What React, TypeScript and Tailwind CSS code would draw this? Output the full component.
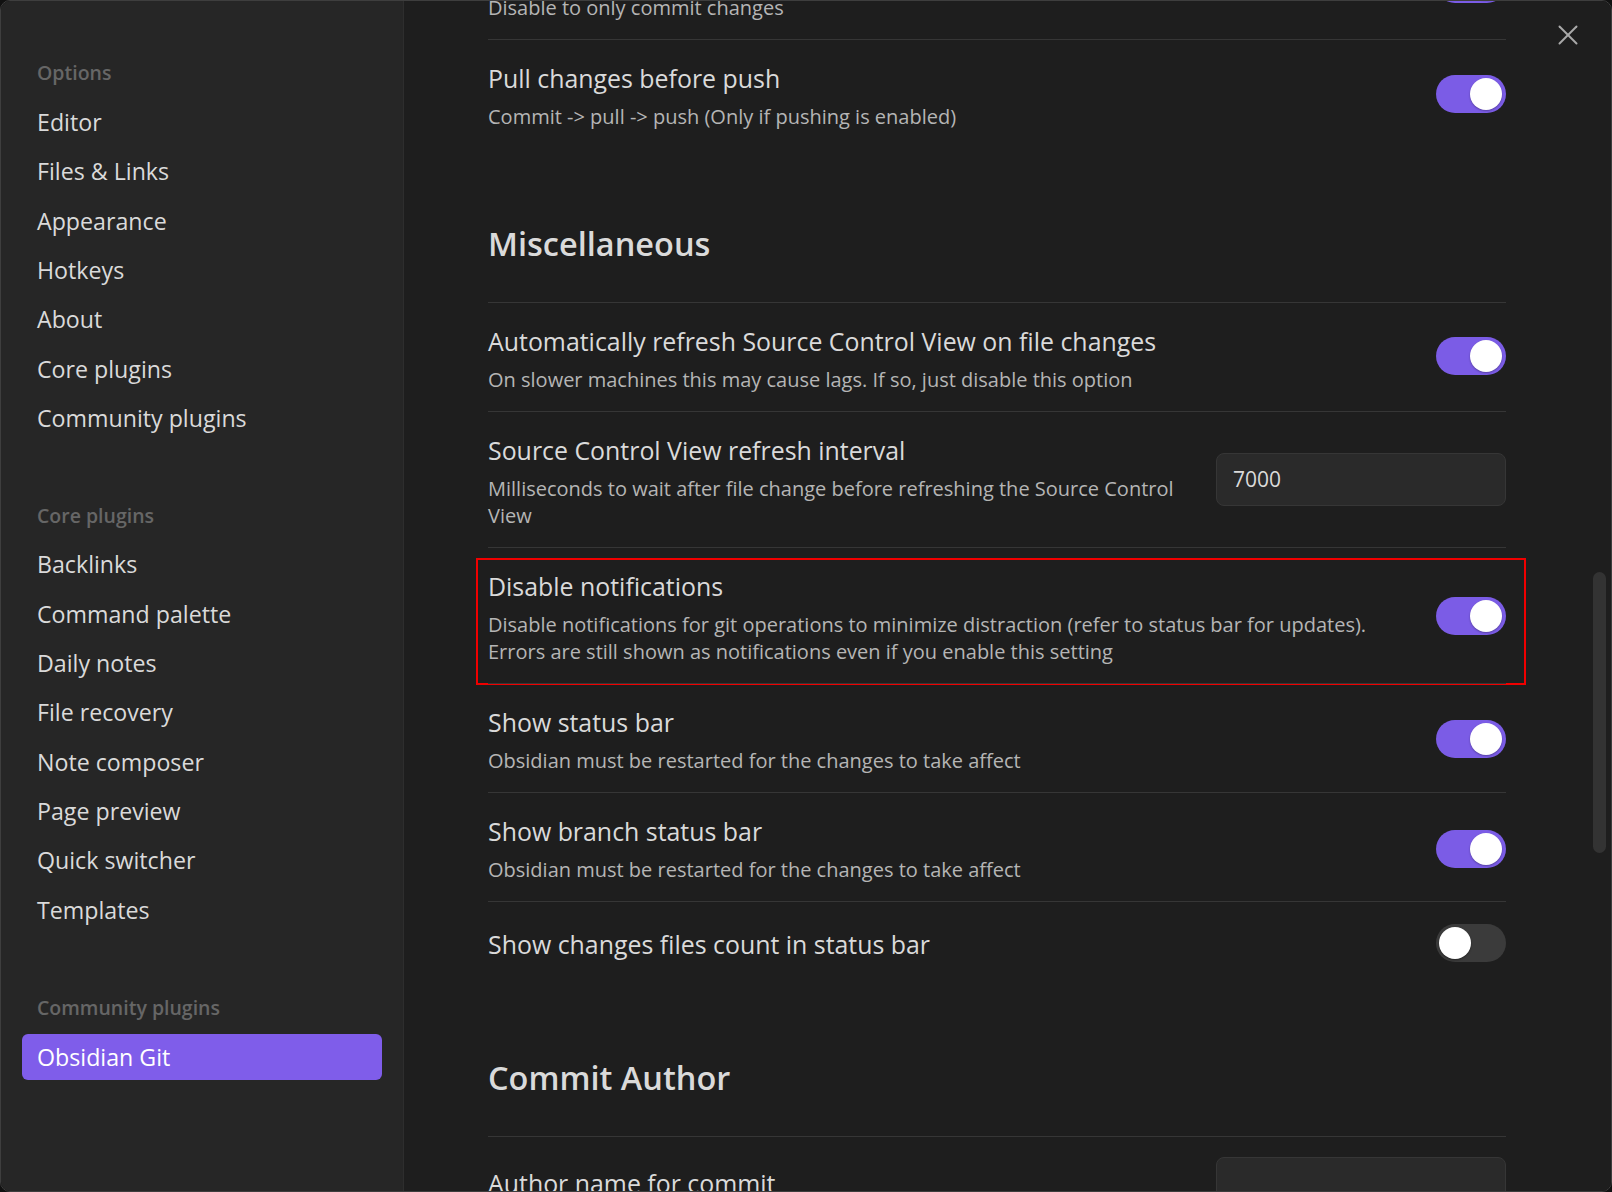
import React from "react";

type Row = {
  title: string;
  desc?: string[];
  control: "on" | "off" | "input";
  value?: string;
  highlight?: boolean;
  lift?: string;
};

function Toggle({ on }: { on: boolean }) {
  return (
    <div
      className={
        on
          ? "relative h-[38px] w-[70px] shrink-0 rounded-full bg-[#7b5ce6]"
          : "relative h-[38px] w-[70px] shrink-0 rounded-full bg-[#3b3b3b]"
      }
    >
      <div
        className={
          on
            ? "absolute right-[4px] top-[3px] h-[32px] w-[32px] rounded-full bg-white shadow-[0_1px_2px_rgba(0,0,0,0.3)]"
            : "absolute left-[3px] top-[3px] h-[32px] w-[32px] rounded-full bg-white shadow-[0_1px_2px_rgba(0,0,0,0.4)]"
        }
      />
    </div>
  );
}

function SettingRow({ row }: { row: Row }) {
  return (
    <div className="relative flex items-center border-t border-[#363636] pt-[22.5px] pb-[18px]">
      <div className="min-w-0 flex-1">
        <div className="whitespace-nowrap text-[24.9px] leading-[30px] text-[#dadada]">{row.title}</div>
        {row.desc && (
          <div className="mt-[10.5px] text-[20px] leading-[27px] text-[#b5b5b5]">
            {row.desc.map((l) => (
              <div key={l} className="whitespace-nowrap">
                {l}
              </div>
            ))}
          </div>
        )}
      </div>
      <div className={"relative ml-[24px] flex shrink-0 justify-end " + (row.lift ?? "")}>
        {row.control === "input" ? (
          <div className="flex h-[53px] w-[290px] items-center rounded-[8px] border border-[#363636] bg-[#2a2a2a] pl-[16px] text-[21px] text-[#dadada]">
            {row.value}
          </div>
        ) : (
          <Toggle on={row.control === "on"} />
        )}
      </div>
      {row.highlight && (
        <div className="pointer-events-none absolute left-[-12px] right-[-20px] top-[10px] bottom-[-2px] border-2 border-[#f00000]" />
      )}
    </div>
  );
}

function NavGroup({ header, items, selected }: { header: string; items: string[]; selected?: string }) {
  return (
    <div className="flex flex-col gap-[3.33px]">
      <div className="flex h-[46px] items-center pl-[15px] text-[19.5px] font-semibold text-[#666666]">{header}</div>
      {items.map((it) => (
        <div
          key={it}
          className={
            it === selected
              ? "flex h-[46px] items-center rounded-[6px] bg-[#7f5dea] pl-[15px] text-[23.2px] text-white"
              : "flex h-[46px] items-center pl-[15px] text-[23.2px] text-[#dadada]"
          }
        >
          {it}
        </div>
      ))}
    </div>
  );
}

export default function App() {
  const misc: Row[] = [
    {
      title: "Automatically refresh Source Control View on file changes",
      desc: ["On slower machines this may cause lags. If so, just disable this option"],
      control: "on",
      lift: "top-[-3px]",
    },
    {
      title: "Source Control View refresh interval",
      desc: ["Milliseconds to wait after file change before refreshing the Source Control", "View"],
      control: "input",
      value: "7000",
      lift: "top-[-2px]",
    },
    {
      title: "Disable notifications",
      desc: [
        "Disable notifications for git operations to minimize distraction (refer to status bar for updates).",
        "Errors are still shown as notifications even if you enable this setting",
      ],
      control: "on",
      highlight: true,
      lift: "top-[-2px]",
    },
    {
      title: "Show status bar",
      desc: ["Obsidian must be restarted for the changes to take affect"],
      control: "on",
      lift: "top-[-1px]",
    },
    {
      title: "Show branch status bar",
      desc: ["Obsidian must be restarted for the changes to take affect"],
      control: "on",
      lift: "top-[0px]",
    },
    { title: "Show changes files count in status bar", control: "off", lift: "top-[-1px]" },
  ];

  return (
    <div className="h-[1192px] w-[1612px] bg-[#111111] font-['Open_Sans',sans-serif]">
      <div className="flex h-full w-full overflow-hidden rounded-[10px] border border-[#3e3e3e]">
        {/* Sidebar */}
        <div className="flex w-[403px] shrink-0 flex-col border-r border-[#2e2e2e] bg-[#262626] px-[21px] pt-[49px]">
          <NavGroup
            header="Options"
            items={["Editor", "Files & Links", "Appearance", "Hotkeys", "About", "Core plugins", "Community plugins"]}
          />
          <div className="mt-[51px]">
            <NavGroup
              header="Core plugins"
              items={[
                "Backlinks",
                "Command palette",
                "Daily notes",
                "File recovery",
                "Note composer",
                "Page preview",
                "Quick switcher",
                "Templates",
              ]}
            />
          </div>
          <div className="mt-[52px]">
            <NavGroup header="Community plugins" items={["Obsidian Git"]} selected="Obsidian Git" />
          </div>
        </div>

        {/* Content */}
        <div className="relative min-w-0 flex-1 overflow-hidden bg-[#1e1e1e]">
          <div className="mt-[-71px] pl-[84px] pr-[105px]">
            <SettingRow
              row={{ title: "Push on backup", desc: ["Disable to only commit changes"], control: "on", lift: "top-[-3px]" }}
            />
            <SettingRow
              row={{
                title: "Pull changes before push",
                desc: ["Commit -> pull -> push (Only if pushing is enabled)"],
                control: "on",
                lift: "top-[-2px]",
              }}
            />
            <div className="mt-[76px] pb-[38px] text-[32.5px] font-semibold leading-[40px] text-[#dadada]">Miscellaneous</div>
            {misc.map((r) => (
              <SettingRow key={r.title} row={r} />
            ))}
            <div className="mt-[77px] pb-[38px] text-[32.5px] font-semibold leading-[40px] text-[#dadada]">Commit Author</div>
            <div className="flex items-start border-t border-[#363636] pt-[20px]">
              <div className="min-w-0 flex-1 pt-[11px]">
                <div className="whitespace-nowrap text-[24.9px] leading-[30px] text-[#dadada]">Author name for commit</div>
              </div>
              <div className="ml-[24px] h-[53px] w-[290px] shrink-0 rounded-[8px] border border-[#363636] bg-[#2a2a2a]" />
            </div>
          </div>

          {/* Close button */}
          <div className="absolute right-[33px] top-[24px] h-[20px] w-[20px] text-[#a9a9a9]">
            <svg width="20" height="20" viewBox="0 0 20 20" fill="none" stroke="currentColor" strokeWidth="2" strokeLinecap="round">
              <line x1="1.5" y1="1.5" x2="18.5" y2="18.5" />
              <line x1="18.5" y1="1.5" x2="1.5" y2="18.5" />
            </svg>
          </div>

          {/* Scrollbar */}
          <div className="absolute right-[5px] top-[571px] h-[281px] w-[13px] rounded-full bg-[#333333]" />
        </div>
      </div>
    </div>
  );
}
